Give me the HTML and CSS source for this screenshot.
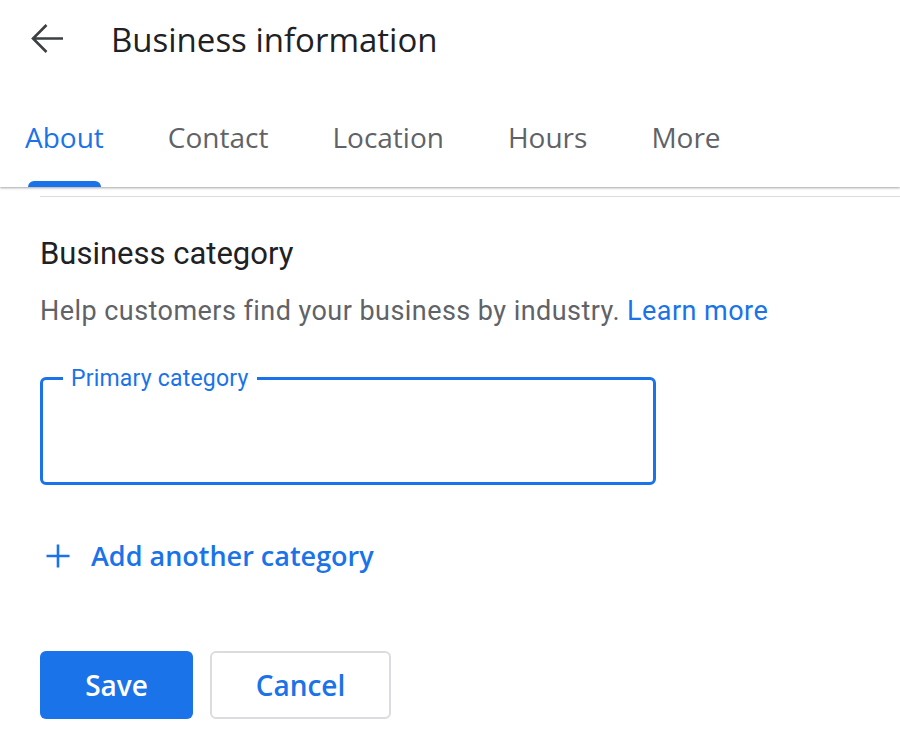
FILE: index.html
```html
<!DOCTYPE html>
<html lang="en">
<head>
    <meta charset="UTF-8">
    <title>Business information</title>
    <link rel="stylesheet" href="styles.css">
</head>
<body>
<div class="header">
    <div class="title-row">
        <span class="back">
            <svg width="34" height="34" viewBox="0 0 34 34"><path d="M33 16.5H3M16.5 3L3 16.5L16.5 30" fill="none" stroke="#3c4043" stroke-width="2.6"/></svg>
        </span>
        <h1 class="title">Business information</h1>
    </div>
    <ul class="tabs">
        <li class="tab current">About</li>
        <li class="tab">Contact</li>
        <li class="tab">Location</li>
        <li class="tab">Hours</li>
        <li class="tab">More</li>
    </ul>
</div>
<div class="content">
    <div class="divider"></div>
    <h2 class="section-title">Business category</h2>
    <p class="help">Help customers find your business by industry. <a class="link">Learn more</a></p>
    <fieldset class="field">
        <legend class="field-label">Primary category</legend>
    </fieldset>
    <div class="add-row">
        <svg width="24" height="24" viewBox="0 0 24 24"><path d="M12 0.5V23.5M0.5 12H23.5" fill="none" stroke="#1a73e8" stroke-width="2.6"/></svg>
        <span>Add another category</span>
    </div>
    <div class="actions">
        <button class="btn btn-save">Save</button>
        <button class="btn btn-cancel">Cancel</button>
    </div>
</div>
</body>
</html>
```

FILE: styles.css
```css
* {
    padding: 0;
    margin: 0;
    list-style: none;
    box-sizing: border-box;
}

body {
    background: #fff;
    font-family: Roboto, "Liberation Sans", sans-serif;
    color: #202124;
}

.header {
    height: 187px;
    background: #fff;
    box-shadow: 0 1px 2px rgba(60, 64, 67, 0.35), 0 1px 3px rgba(60, 64, 67, 0.15);
    position: relative;
}

.title-row {
    height: 78px;
    display: flex;
    align-items: center;
    padding-left: 30px;
}

.back {
    width: 34px;
    height: 34px;
    display: flex;
}

.title {
    margin-left: 47px;
    font-family: "Open Sans", sans-serif;
    font-weight: 400;
    font-size: 33px;
    color: #202124;
}

.tabs {
    display: flex;
    margin-top: 22px;
    padding-left: 25px;
    gap: 64px;
}

.tab {
    height: 87px;
    padding-top: 18px;
    font-family: "Open Sans", sans-serif;
    font-size: 28px;
    color: #5f6368;
    position: relative;
}

.tab.current {
    color: #1a73e8;
}

.tab.current::after {
    content: "";
    position: absolute;
    left: 3px;
    right: 3px;
    bottom: 0;
    height: 6px;
    background: #1a73e8;
    border-radius: 6px 6px 0 0;
}

.content {
    padding-left: 40px;
}

.divider {
    margin-top: 9px;
    height: 1px;
    background: #dadce0;
}

.section-title {
    margin-top: 38px;
    font-weight: 400;
    font-size: 31px;
    color: #202124;
}

.help {
    margin-top: 23px;
    font-size: 27px;
    letter-spacing: 0.45px;
    color: #5f6368;
}

.link {
    color: #1a73e8;
}

.field {
    margin-top: 38px;
    width: 616px;
    height: 120px;
    border: 3px solid #1a73e8;
    border-radius: 6px;
    padding: 0 20px;
}

.field-label {
    padding: 0 8px;
    font-size: 23px;
    letter-spacing: 0.2px;
    color: #1a73e8;
}

.add-row {
    margin-top: 52px;
    display: flex;
    align-items: center;
    padding-left: 6px;
    gap: 21px;
    font-family: "Open Sans", sans-serif;
    font-weight: 600;
    font-size: 27px;
    color: #1a73e8;
}

.actions {
    margin-top: 77px;
    display: flex;
    gap: 17px;
}

.btn {
    height: 68px;
    border-radius: 6px;
    font-family: "Open Sans", sans-serif;
    font-weight: 600;
    font-size: 28px;
    cursor: pointer;
}

.btn-save {
    width: 153px;
    background: #1a73e8;
    border: 0;
    color: #fff;
}

.btn-cancel {
    width: 181px;
    background: #fff;
    border: 2px solid #dadce0;
    color: #1a73e8;
}
```
